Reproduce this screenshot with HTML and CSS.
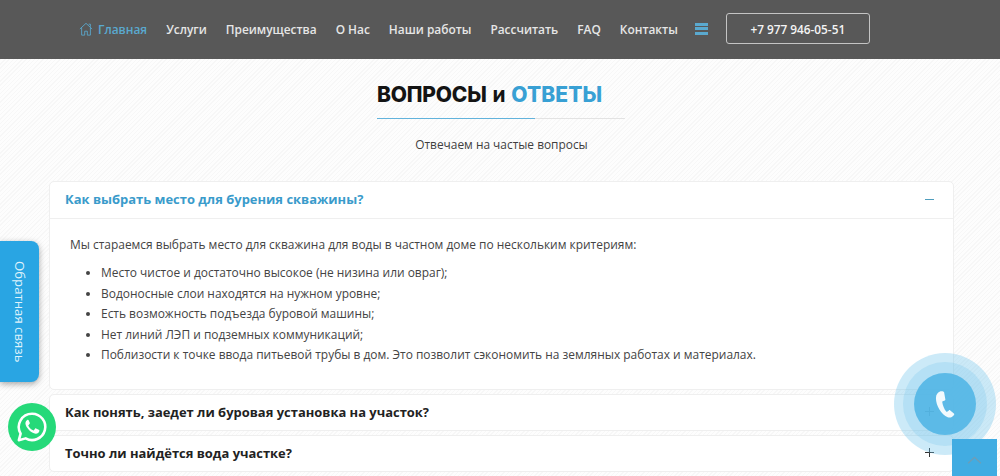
FILE: index.html
```html
<!DOCTYPE html>
<html lang="ru">
<head>
<meta charset="utf-8">
<title>Вопросы и ответы</title>
<link rel="stylesheet" href="styles.css">
</head>
<body>
<header class="topbar">
  <nav class="nav">
    <a class="nav-link is-active" href="#">
      <svg class="home-icon" viewBox="0 0 16 16" width="14" height="14" aria-hidden="true"><path d="M1 8 8 1.500 15 8M3 6.500V15h3.500v-4.500h3V15H13V6.500M11 2.500h2v3" fill="none" stroke="currentColor" stroke-width="1"/></svg>
      Главная</a>
    <a class="nav-link" href="#">Услуги</a>
    <a class="nav-link" href="#">Преимущества</a>
    <a class="nav-link" href="#">О Нас</a>
    <a class="nav-link" href="#">Наши работы</a>
    <a class="nav-link" href="#">Рассчитать</a>
    <a class="nav-link" href="#">FAQ</a>
    <a class="nav-link" href="#">Контакты</a>
    <span class="burger"><i></i><i></i><i></i></span>
    <a class="phone" href="#">+7 977 946-05-51</a>
  </nav>
</header>
<main class="main">
  <div class="heading">
    <h2 class="title">ВОПРОСЫ <span class="title-and">и</span> <span class="title-accent">ОТВЕТЫ</span></h2>
    <div class="rule"></div>
  </div>
  <p class="subtitle">Отвечаем на частые вопросы</p>
  <section class="accordion">
    <article class="item">
      <div class="item-head is-open"><span>Как выбрать место для бурения скважины?</span><span class="sign sign-minus"></span></div>
      <div class="item-body">
        <p>Мы стараемся выбрать место для скважина для воды в частном доме по нескольким критериям:</p>
        <ul>
          <li>Место чистое и достаточно высокое (не низина или овраг);</li>
          <li>Водоносные слои находятся на нужном уровне;</li>
          <li>Есть возможность подъезда буровой машины;</li>
          <li>Нет линий ЛЭП и подземных коммуникаций;</li>
          <li>Поблизости к точке ввода питьевой трубы в дом. Это позволит сэкономить на земляных работах и материалах.</li>
        </ul>
      </div>
    </article>
    <article class="item">
      <div class="item-head"><span>Как понять, заедет ли буровая установка на участок?</span><span class="sign sign-plus"></span></div>
    </article>
    <article class="item">
      <div class="item-head"><span>Точно ли найдётся вода участке?</span><span class="sign sign-plus"></span></div>
    </article>
  </section>
</main>
<a class="feedback" href="#">Обратная связь</a>
<a class="whatsapp" href="#" aria-label="WhatsApp">
  <svg viewBox="0 0 32 32" width="34" height="34" aria-hidden="true">
    <path d="M16 3.500A12.400 12.400 0 0 0 5.300 22.200L3.600 28.400l6.400-1.700A12.400 12.400 0 1 0 16 3.500Z" fill="none" stroke="#fff" stroke-width="2.400" stroke-linejoin="round"/>
    <path d="M11.600 9.400c-.9.4-1.900 1.800-1.800 3.400.2 3.600 5.600 9.400 9.700 9.600 1.600.1 3-1 3.300-2.100.2-.7.2-1.300 0-1.500l-3-1.500c-.3-.1-.6 0-.8.2l-1.200 1.500c-.2.2-.5.3-.8.1-2-.9-3.400-2.300-4.400-4.300-.1-.3 0-.5.2-.7l1-1.200c.2-.2.2-.5.1-.8l-1.200-2.700c-.1-.3-.7-.3-1.100-.3Z" fill="#fff"/>
  </svg>
</a>
<div class="call">
  <div class="call-ring-outer"></div>
  <div class="call-ring-inner"></div>
  <div class="call-core">
    <svg viewBox="0 0 24 32" width="22" height="29" aria-hidden="true"><path d="M7 1.500c-3 1-5 3.500-5 7.500 0 8 6 18 13 21 2.500 1 5 0 7-2.500.4-.6.3-1.100-.2-1.500l-4-3.500c-.5-.4-1-.4-1.500 0l-2 1.500c-.4.200-.8.200-1-.2-2.300-3.200-3.700-6.500-4.300-10.300-.1-.5.100-.8.500-1l2.300-1c.5-.2.700-.6.600-1.100L11 2.500C10.800 1.500 8.500 1 7 1.500Z" fill="#f2fafe"/></svg>
  </div>
</div>
<a class="to-top" href="#" aria-label="Наверх">
  <svg viewBox="0 0 18 10" width="15" height="8" aria-hidden="true"><path d="M1 9 9 1.500 17 9" fill="none" stroke="#6f9db5" stroke-width="1.500"/></svg>
</a>
</body>
</html>
```
FILE: styles.css
```css
* { box-sizing: border-box; }
html, body { height: 476px; overflow: hidden; }
body {
  margin: 0;
  position: relative;
  font-family: "Open Sans", "Noto Sans", sans-serif;
  color: #3a3a3a;
  background-color: #fdfdfd;
  background-image: repeating-linear-gradient(135deg, #f7f7f7 0, #f7f7f7 1px, transparent 1px, transparent 3px);
}
a { text-decoration: none; color: inherit; }

.topbar { height: 59px; background: #585858; }
.nav {
  display: flex;
  align-items: center;
  height: 57px;
  padding-left: 79px;
}
.nav-link {
  display: flex;
  align-items: center;
  gap: 5px;
  margin-right: 19px;
  font-size: 11.900px;
  font-weight: 600;
  color: #e6e6e6;
  white-space: nowrap;
}
.nav-link.is-active { color: #5aa9cf; }
.home-icon { flex: none; }
.burger {
  display: flex;
  flex-direction: column;
  gap: 1.500px;
  width: 13px;
  margin-left: -2px;
  margin-right: 18px;
}
.burger i { display: block; height: 3px; background: #5aa9cf; }
.phone {
  display: flex;
  align-items: center;
  justify-content: center;
  width: 144px;
  height: 31px;
  border: 1px solid #c4c4c4;
  border-radius: 3px;
  font-size: 11.800px;
  font-weight: 600;
  color: #f4f4f4;
}

.main {
  width: 905px;
  margin-left: 49px;
  display: flex;
  flex-direction: column;
  align-items: center;
}
.heading { width: 248px; margin-top: 21px; margin-right: 1px; }
.title {
  margin: 0;
  height: 38px;
  font-family: Inter, "Liberation Sans", sans-serif;
  font-size: 21px;
  line-height: 30px;
  font-weight: 800;
  letter-spacing: -0.2px;
  word-spacing: 1.500px;
  color: #141414;
  white-space: nowrap;
}
.title-and { font-weight: 700; }
.title-accent { color: #38a0d4; letter-spacing: 0.1px; }
.rule {
  height: 1px;
  background: linear-gradient(to right, #62b3dc 0, #62b3dc 158px, #e3e3e3 158px);
}
.subtitle {
  margin: 15px 0 0;
  font-size: 11.900px;
  line-height: 20px;
  color: #3f3f3f;
}

.accordion { width: 100%; margin-top: 27px; display: flex; flex-direction: column; gap: 4px; }
.item {
  background: #fff;
  border: 1px solid #efefef;
  border-radius: 5px;
}
.item-head {
  display: flex;
  align-items: center;
  justify-content: space-between;
  height: 35px;
  padding: 0 19px 2px 15px;
  font-size: 12.950px;
  font-weight: 700;
  color: #222;
}
.item-head.is-open { height: 37px; color: #3a9bcb; border-bottom: 1px solid #efefef; }
.sign { position: relative; display: block; width: 9px; height: 9px; }
.sign::before {
  content: "";
  position: absolute;
  left: 0;
  right: 0;
  top: 4px;
  height: 1px;
  background: #333;
}
.sign-plus::after {
  content: "";
  position: absolute;
  top: 0;
  bottom: 0;
  left: 4px;
  width: 1px;
  background: #333;
}
.sign-minus::before { background: #4f9dbd; }
.item-body { padding: 15.500px 20px 0; height: 170px; font-size: 11.950px; line-height: 20.500px; color: #444; }
.item-body p { margin: 0 0 8px; }
.item-body ul { margin: 0; padding-left: 31px; }

.feedback {
  position: absolute;
  left: 0;
  top: 241px;
  width: 39px;
  height: 141px;
  display: flex;
  align-items: center;
  justify-content: center;
  background: #29a5e3;
  border-radius: 0 8px 8px 0;
  box-shadow: 0 2px 6px rgba(0, 0, 0, .35);
  color: #dff2fb;
  font-size: 13.200px;
  writing-mode: vertical-rl;
}
.whatsapp {
  position: absolute;
  left: 8px;
  top: 403px;
  width: 48px;
  height: 48px;
  border-radius: 50%;
  background: #25d979;
  display: flex;
  align-items: center;
  justify-content: center;
}
.call { position: absolute; left: 894px; top: 353px; width: 102px; height: 102px; }
.call-ring-outer { position: absolute; inset: 0; border-radius: 50%; background: rgba(110, 195, 235, .35); }
.call-ring-inner { position: absolute; inset: 9px; border-radius: 50%; background: rgba(110, 195, 235, .25); }
.call-core {
  position: absolute;
  inset: 20px;
  border-radius: 50%;
  background: rgba(82, 182, 230, .9);
  display: flex;
  align-items: center;
  justify-content: center;
}
.to-top {
  position: absolute;
  left: 952px;
  top: 439px;
  width: 45px;
  height: 37px;
  background: #41ace2;
  display: flex;
  align-items: center;
  justify-content: center;
  padding-top: 5px;
}
```
